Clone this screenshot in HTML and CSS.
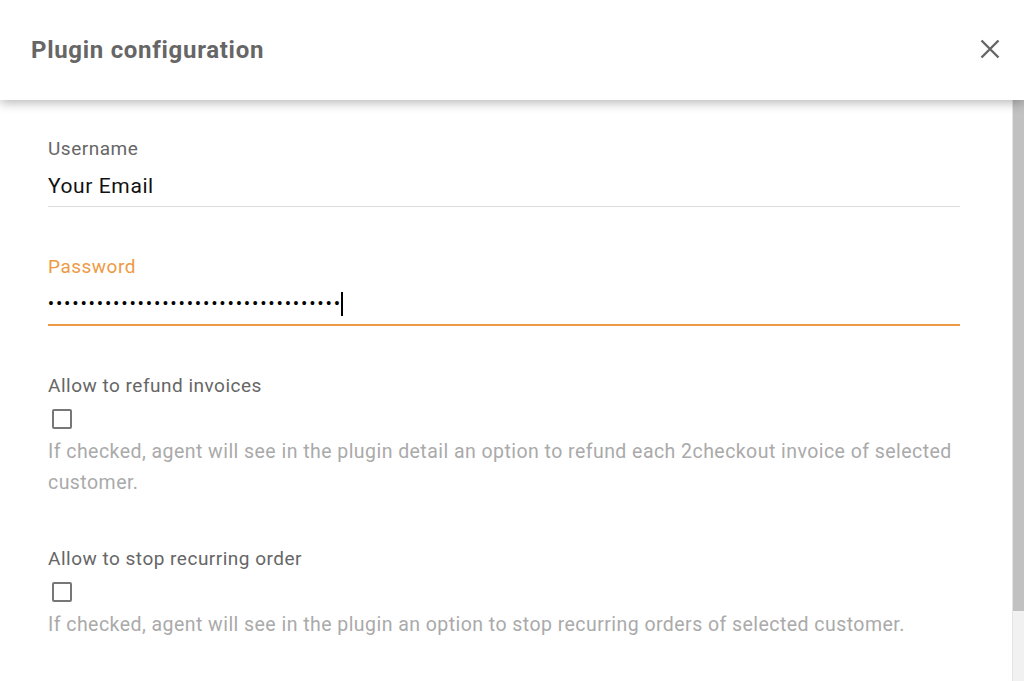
FILE: index.html
```html
<!DOCTYPE html>
<html>
<head>
<meta charset="utf-8">
<link rel="stylesheet" href="styles.css">
</head>
<body>
<div class="dialog">
  <header class="head">
    <h1 class="title">Plugin configuration</h1>
    <button class="close" aria-label="Close">
      <svg width="20" height="20" viewBox="0 0 20 20"><path d="M1.5 1.5 L18.5 18.5 M18.5 1.5 L1.5 18.5" stroke="#666" stroke-width="2.4" fill="none"/></svg>
    </button>
  </header>
  <div class="body">
    <div class="content">
      <div class="field">
        <div class="label">Username</div>
        <div class="input">Your Email</div>
      </div>
      <div class="field focused">
        <div class="label">Password</div>
        <div class="input"><span class="dots">••••••••••••••••••••••••••••••••••••</span><span class="caret"></span></div>
      </div>
      <div class="check-field">
        <div class="label">Allow to refund invoices</div>
        <div class="check-row"><span class="box"></span></div>
        <div class="desc">If checked, agent will see in the plugin detail an option to refund each 2checkout invoice of selected customer.</div>
      </div>
      <div class="check-field">
        <div class="label">Allow to stop recurring order</div>
        <div class="check-row"><span class="box"></span></div>
        <div class="desc">If checked, agent will see in the plugin an option to stop recurring orders of selected customer.</div>
      </div>
    </div>
    <div class="scrollbar"><div class="thumb"></div></div>
  </div>
</div>
</body>
</html>
```

FILE: styles.css
```css
* { box-sizing: border-box; }
html, body { margin: 0; padding: 0; background: #fff; }
body { font-family: Roboto, "Liberation Sans", sans-serif; width: 1024px; height: 681px; overflow: hidden; }
.dialog { display: flex; flex-direction: column; height: 681px; }
.head {
  height: 100px; flex: none;
  display: flex; align-items: center; justify-content: space-between;
  padding: 0 24px 0 31px;
  background: #fff;
  box-shadow: 0 3px 10px rgba(0,0,0,0.28);
  position: relative; z-index: 2;
}
.title { margin: 0; font-size: 24px; font-weight: 700; color: #666; letter-spacing: 0.7px; }
.close { border: 0; background: none; padding: 0; width: 20px; height: 20px; display: flex; cursor: pointer; margin-top: -2px; }
.body { flex: 1; display: flex; min-height: 0; }
.content { flex: 1; padding: 37px 52px 0 48px; }
.label { font-size: 19px; line-height: 24px; color: #666; letter-spacing: 0.5px; }
.field { margin-bottom: 48px; }
.input {
  margin-top: 13px; font-size: 21px; line-height: 24px; color: #111; letter-spacing: 0.6px;
  padding-bottom: 8px; border-bottom: 1px solid #ddd;
  display: flex; align-items: center; height: 33px;
}
.focused .label { color: #ee9a45; }
.focused .input { border-bottom: 2px solid #ee9a45; height: 34px; }
.dots { font-size: 16px; letter-spacing: 2.42px; color: #000; font-weight: 700; }
.caret { width: 1.5px; height: 24px; background: #000; margin-left: -1px; }
.check-field { margin-bottom: 49px; }
.check-row { padding: 11px 0 7px 4px; height: 38px; }
.box { display: block; width: 20px; height: 20px; border: 2px solid #777; border-radius: 2px; }
.desc { font-size: 19.5px; line-height: 31px; color: #aaa; letter-spacing: 0.45px; }
.scrollbar { width: 12px; flex: none; background: #f1f1f1; border-left: 1px solid #e4e4e4; }
.thumb { height: 511px; background: #c1c1c1; }
```
